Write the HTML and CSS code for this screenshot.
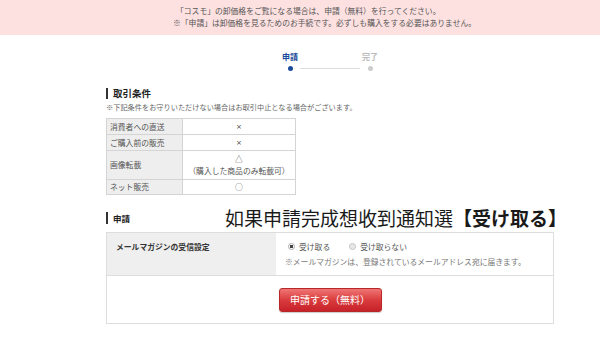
FILE: index.html
```html
<!DOCTYPE html>
<html lang="ja">
<head>
    <meta charset="UTF-8">
    <meta name="viewport" content="width=device-width, initial-scale=1.0">
    <title>申請</title>
    <link rel="stylesheet" href="styles.css">
</head>
<body>
    <div class="notice">
        <p class="notice-first">「コスモ」の卸価格をご覧になる場合は、申請（無料）を行ってください。</p>
        <p>※「申請」は卸価格を見るためのお手続です。必ずしも購入をする必要はありません。</p>
    </div>
    <div class="content">
        <div class="steps">
            <div class="step current">
                <span class="step-label">申請</span>
                <span class="step-dot"></span>
            </div>
            <div class="step-line"></div>
            <div class="step">
                <span class="step-label">完了</span>
                <span class="step-dot"></span>
            </div>
        </div>

        <section class="terms">
            <h2 class="section-title">取引条件</h2>
            <p class="terms-note">※下記条件をお守りいただけない場合はお取引中止となる場合がございます。</p>
            <table class="terms-table">
                <tr>
                    <th>消費者への直送</th>
                    <td><span class="mark">×</span></td>
                </tr>
                <tr>
                    <th>ご購入前の販売</th>
                    <td><span class="mark">×</span></td>
                </tr>
                <tr class="tall">
                    <th>画像転載</th>
                    <td>△<br>（購入した商品のみ転載可）</td>
                </tr>
                <tr>
                    <th>ネット販売</th>
                    <td>○</td>
                </tr>
            </table>
        </section>

        <section class="apply">
            <div class="apply-head">
                <h2 class="section-title small">申請</h2>
                <span class="annotation">如果申請完成想收到通知選<b>【受け取る】</b></span>
            </div>
            <div class="form-box">
                <div class="form-row">
                    <div class="form-label">メールマガジンの受信設定</div>
                    <div class="form-field">
                        <div class="radios">
                            <span class="radio checked"><span class="radio-mark"></span>受け取る</span>
                            <span class="radio"><span class="radio-mark"></span>受け取らない</span>
                        </div>
                        <p class="field-note">※メールマガジンは、登録されているメールアドレス宛に届きます。</p>
                    </div>
                </div>
                <div class="form-submit">
                    <button class="submit-btn">申請する（無料）</button>
                </div>
            </div>
        </section>
    </div>
</body>
</html>
```

FILE: styles.css
```css
body {
    margin: 0;
    font-family: "Noto Sans CJK JP", "Noto Sans", sans-serif;
    color: #333;
    background-color: #fff;
}

p {
    margin: 0;
}

.notice {
    background-color: #fde1e1;
    height: 35px;
    box-sizing: border-box;
    padding: 5px 0 0 173px;
    font-size: 7.8px;
    line-height: 12px;
    color: #555;
}

.notice-first {
    padding-left: 3px;
}

.content {
    margin-left: 106px;
    width: 448px;
}

/* step indicator */
.steps {
    display: flex;
    justify-content: center;
    align-items: flex-end;
    margin-top: 17px;
}

.step {
    display: flex;
    flex-direction: column;
    align-items: center;
    width: 20px;
}

.step-label {
    font-size: 8px;
    line-height: 10px;
    font-weight: bold;
    white-space: nowrap;
    color: #bbb;
}

.step-dot {
    width: 5px;
    height: 5px;
    border-radius: 50%;
    background-color: #ccc;
    margin-top: 4px;
}

.step.current .step-label {
    color: #1a4b9b;
}

.step.current .step-dot {
    background-color: #1a4b9b;
}

.step-line {
    width: 60px;
    height: 1px;
    background-color: #ddd;
    margin-bottom: 2px;
}

/* sections */
.section-title {
    flex-shrink: 0;
    margin: 0;
    border-left: 2px solid #333;
    padding-left: 5px;
    font-size: 9.5px;
    line-height: 11px;
    font-weight: bold;
    white-space: nowrap;
    color: #222;
}

.section-title.small {
    font-size: 8.5px;
    line-height: 12px;
}

.terms {
    margin-top: 17px;
}

.terms-note {
    margin: 3px 0 6px;
    font-size: 7.2px;
    line-height: 10px;
    color: #666;
}

.terms-table {
    border-collapse: collapse;
    width: 190px;
    font-size: 7.8px;
    line-height: 12px;
    color: #555;
}

.terms-table th,
.terms-table td {
    border: 1px solid #d4d4d4;
    padding: 1px 3px;
}

.terms-table .tall th,
.terms-table .tall td {
    padding: 2px 3px;
}

.terms-table th {
    width: 69px;
    background-color: #eee;
    text-align: left;
    font-weight: normal;
}

.terms-table td {
    text-align: center;
}

.mark {
    font-family: "DejaVu Sans", sans-serif;
    font-size: 7px;
    color: #444;
}

/* apply form */
.apply {
    margin-top: 13px;
}

.apply-head {
    display: flex;
    align-items: center;
    margin-bottom: 4px;
}

.annotation {
    flex-shrink: 0;
    margin-left: 95px;
    white-space: nowrap;
    font-family: "Noto Sans CJK TC", "Noto Sans CJK JP", sans-serif;
    font-size: 19px;
    line-height: 20px;
    color: #1a1a1a;
}

.annotation b {
    font-family: "Noto Sans CJK JP", sans-serif;
    font-weight: bold;
}

.form-box {
    border: 1px solid #ddd;
}

.form-row {
    display: flex;
    border-bottom: 1px solid #ddd;
}

.form-label {
    width: 169px;
    box-sizing: border-box;
    background-color: #efefef;
    padding: 8px 9px;
    font-size: 7.8px;
    line-height: 11px;
    font-weight: bold;
    color: #333;
}

.form-field {
    padding: 8px 9px 7px;
    font-size: 7.8px;
    color: #555;
}

.radios {
    display: flex;
    align-items: center;
    line-height: 11px;
    margin-left: 3px;
}

.radio {
    display: inline-flex;
    align-items: center;
    gap: 4px;
    margin-right: 19px;
}

.radio-mark {
    width: 7px;
    height: 7px;
    box-sizing: border-box;
    border-radius: 50%;
    border: 1px solid #c4c4c4;
    background-color: #e8e8e8;
}

.radio.checked .radio-mark {
    border-color: #aaa;
    background: radial-gradient(circle, #444 0 1.5px, #fff 2px);
}

.field-note {
    margin-top: 4px;
    line-height: 12px;
    color: #777;
}

.form-submit {
    display: flex;
    justify-content: center;
    padding: 12px 0 11px;
}

.submit-btn {
    width: 103px;
    height: 24px;
    box-sizing: border-box;
    border: 1px solid #b82828;
    border-radius: 3px;
    background: linear-gradient(#ef7575, #da3c3c 50%, #c6222a);
    box-shadow: 0 1px 1px rgba(0, 0, 0, 0.2);
    color: #fff;
    font-family: inherit;
    font-size: 10px;
    line-height: 1;
    padding: 0;
    cursor: pointer;
}
```
